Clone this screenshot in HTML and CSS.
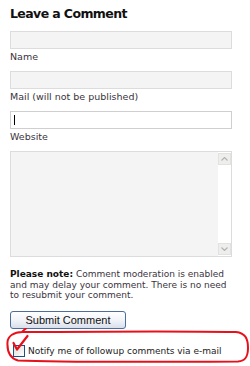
FILE: index.html
```html
<!DOCTYPE html>
<html>
<head>
<meta charset="utf-8">
<link rel="stylesheet" href="styles.css">
</head>
<body>
<div class="form">
  <h2 class="title">Leave a Comment</h2>
  <div class="field">
    <div class="box grey"></div>
    <div class="label">Name</div>
  </div>
  <div class="field">
    <div class="box grey"></div>
    <div class="label">Mail (will not be published)</div>
  </div>
  <div class="field">
    <div class="box white"><span class="caret"></span></div>
    <div class="label">Website</div>
  </div>
  <div class="textarea">
    <div class="ta-main"></div>
    <div class="scroll">
      <div class="sbtn"><svg width="7" height="4" viewBox="0 0 7 4"><path d="M0.5 3.5 L3.5 0.5 L6.5 3.5" fill="none" stroke="#b4b4b4" stroke-width="1.2"/></svg></div>
      <div class="track"></div>
      <div class="sbtn"><svg width="7" height="4" viewBox="0 0 7 4"><path d="M0.5 0.5 L3.5 3.5 L6.5 0.5" fill="none" stroke="#b4b4b4" stroke-width="1.2"/></svg></div>
    </div>
  </div>
  <p class="note"><b class="strong">Please note:</b> Comment moderation is enabled and may delay your comment. There is no need to resubmit your comment.</p>
  <div class="submit">Submit Comment</div>
  <div class="notify">
    <span class="check"></span>
    <span class="notify-text">Notify me of followup comments via e-mail</span>
  </div>
</div>
<svg class="annot" width="250" height="40" viewBox="0 0 250 40">
  <path d="M26 0.5 C24 2 23 3 22 4 C14 4 8 8 7.5 14 C7 22 9 30 18 32.5 C60 34.5 150 34 238 33.5 C246 33 248 28 248 20 C248 10 245 5 236 4 C180 3 100 3.5 40 4 C30 4 24 4 22 4" fill="none" stroke="#e8101a" stroke-width="2" stroke-linecap="round"/>
  <path d="M13.5 15 L17 21.5 L27.5 8" fill="none" stroke="#e8101a" stroke-width="2.2" stroke-linecap="round" stroke-linejoin="round"/>
</svg>
</body>
</html>
```
FILE: styles.css
```css
html, body {
  margin: 0;
  padding: 0;
  background: #fff;
}
body {
  width: 250px;
  height: 366px;
  overflow: hidden;
  position: relative;
  font-family: "DejaVu Sans", Verdana, sans-serif;
  color: #333;
}
.form {
  padding: 6px 18px 0 10px;
}
.title {
  margin: 0 0 9px 0;
  font-size: 12.5px;
  line-height: 16px;
  letter-spacing: -0.6px;
  font-weight: bold;
  color: #111;
}
.field {
  display: flex;
  flex-direction: column;
  margin-bottom: 8px;
}
.box {
  height: 16px;
  border: 1px solid #dcdcdc;
  display: flex;
  align-items: center;
}
.grey { background: #f4f4f4; }
.white { background: #fff; border-color: #cfcfcf; }
.caret {
  width: 1px;
  height: 10px;
  background: #000;
  margin-left: 3px;
}
.label {
  margin-top: 2px;
  font-size: 9.5px;
  line-height: 12px;
  color: #3a3340;
}
.textarea {
  height: 104px;
  border: 1px solid #dcdcdc;
  display: flex;
}
.ta-main {
  flex: 1;
  background: #f4f4f4;
}
.scroll {
  width: 13px;
  background: #fff;
  display: flex;
  flex-direction: column;
}
.sbtn {
  height: 12px;
  margin: 1px 0;
  background: #eeeeec;
  border: 1px solid #e2e2e0;
  box-sizing: border-box;
  display: flex;
  align-items: center;
  justify-content: center;
}
.track { flex: 1; }
.note {
  margin: 12px 0 0 0;
  font-size: 9px;
  line-height: 10.5px;
  color: #3a3340;
}
.strong { color: #111; }
.submit {
  margin-top: 10px;
  width: 114px;
  height: 16px;
  border: 1px solid #4d6d9a;
  border-radius: 3px;
  background: linear-gradient(#ffffff, #f2f4f8 50%, #d8e0ec);
  font-family: "Liberation Sans", Arial, sans-serif;
  font-size: 11px;
  line-height: 16px;
  text-align: center;
  color: #111;
}
.notify {
  margin-top: 16px;
  display: flex;
  align-items: center;
  padding-left: 3px;
}
.check {
  width: 10px;
  height: 10px;
  border: 1px solid #1c5180;
  background: linear-gradient(135deg, #dcdcd7, #fff);
  margin-right: 3px;
  flex: none;
}
.notify-text {
  font-size: 9px;
  line-height: 12px;
  color: #222;
}
.annot {
  position: absolute;
  left: 0;
  top: 328px;
}
```
